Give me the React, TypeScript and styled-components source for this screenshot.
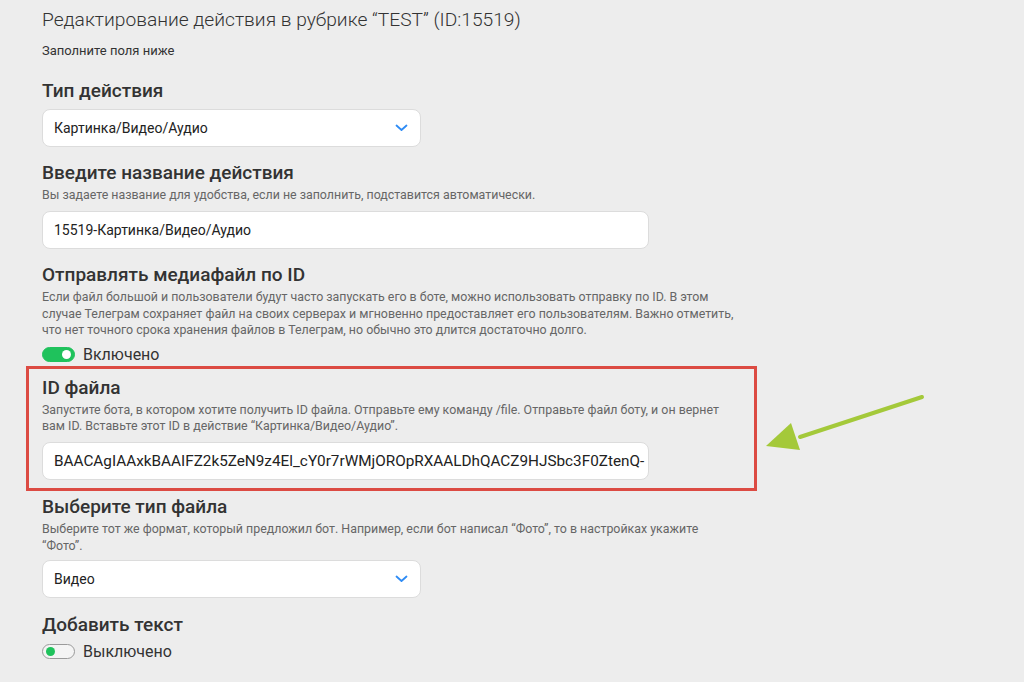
import styled, { createGlobalStyle } from "styled-components";

const GlobalStyle = createGlobalStyle`
  html, body {
    margin: 0;
    padding: 0;
    background: #ededed;
  }
  body {
    font-family: Roboto, "Liberation Sans", sans-serif;
    color: #2b2b2b;
    overflow: hidden;
  }
`;

const Page = styled.div`
  position: relative;
  width: 1024px;
  height: 682px;
  overflow: hidden;
  background: #ededed;
`;

const Form = styled.div`
  display: flex;
  flex-direction: column;
  padding: 8px 0 0 42px;
`;

const Title = styled.h1`
  margin: 0;
  font-size: 19.2px;
  line-height: 24px;
  font-weight: 300;
  color: #333;
`;

const Subtitle = styled.p`
  margin: 11px 0 0;
  font-size: 13px;
  line-height: 16px;
  color: #333;
`;

const Field = styled.div<{ $gap?: number }>`
  display: flex;
  flex-direction: column;
  margin-top: ${(p) => p.$gap ?? 15}px;
`;

const Label = styled.h2`
  margin: 0;
  font-size: 19px;
  line-height: 22px;
  font-weight: 500;
  color: #333;
`;

const Hint = styled.p<{ $tight?: boolean }>`
  margin: 3px 0 ${(p) => (p.$tight ? -1 : 1)}px;
  font-size: 12.4px;
  line-height: 16.4px;
  color: #666;
  white-space: nowrap;
`;

const Box = styled.div<{ $wide?: boolean; $mono?: boolean }>`
  display: flex;
  align-items: center;
  justify-content: space-between;
  box-sizing: border-box;
  width: ${(p) => (p.$wide ? 607 : 379)}px;
  height: 38px;
  margin-top: 7px;
  padding: 0 12px 0 11px;
  background: #fff;
  border: 1px solid #dcdcdc;
  border-radius: 8px;
  font-size: ${(p) => (p.$mono ? 15.3 : 14)}px;
  color: #222;
  white-space: nowrap;
  overflow: hidden;
`;

const Toggle = styled.div`
  display: flex;
  align-items: center;
  gap: 8px;
  margin-top: 5px;
  height: 20px;
  font-size: 16px;
  color: #333;
`;

const Switch = styled.span<{ $on?: boolean }>`
  position: relative;
  box-sizing: border-box;
  width: 33px;
  height: 15px;
  border-radius: 8px;
  background: ${(p) => (p.$on ? "#1fc25c" : "#f4f4f4")};
  border: 1px solid ${(p) => (p.$on ? "#1fc25c" : "#9a9a9a")};

  &::after {
    content: "";
    position: absolute;
    top: 2px;
    left: ${(p) => (p.$on ? "19px" : "3px")};
    width: 9px;
    height: 9px;
    border-radius: 50%;
    background: ${(p) => (p.$on ? "#fff" : "#1fc25c")};
  }
`;

const Highlight = styled.div`
  box-sizing: border-box;
  width: 731px;
  margin: 1px 0 0 -16px;
  padding: 8px 13px 8px;
  border: 3px solid #dc4b43;
  display: flex;
  flex-direction: column;
`;

const Arrow = styled.svg`
  position: absolute;
  left: 760px;
  top: 390px;
`;

const Chevron = () => (
  <svg width="13" height="8" viewBox="0 0 13 8">
    <path d="M1.5 1.5 L6.5 6 L11.5 1.5" fill="none" stroke="#2f8cf5" strokeWidth="1.8" strokeLinecap="round" strokeLinejoin="round" />
  </svg>
);

export default function App() {
  return (
    <Page>
      <GlobalStyle />
      <Form>
        <Title>Редактирование действия в рубрике “TEST” (ID:15519)</Title>
        <Subtitle>Заполните поля ниже</Subtitle>

        <Field $gap={21}>
          <Label>Тип действия</Label>
          <Box>
            <span>Картинка/Видео/Аудио</span>
            <Chevron />
          </Box>
        </Field>

        <Field>
          <Label>Введите название действия</Label>
          <Hint>Вы задаете название для удобства, если не заполнить, подставится автоматически.</Hint>
          <Box $wide>15519-Картинка/Видео/Аудио</Box>
        </Field>

        <Field>
          <Label>Отправлять медиафайл по ID</Label>
          <Hint>
            Если файл большой и пользователи будут часто запускать его в боте, можно использовать отправку по ID. В этом
            <br />
            случае Телеграм сохраняет файл на своих серверах и мгновенно предоставляет его пользователям. Важно отметить,
            <br />
            что нет точного срока хранения файлов в Телеграм, но обычно это длится достаточно долго.
          </Hint>
          <Toggle>
            <Switch $on />
            Включено
          </Toggle>
        </Field>

        <Highlight>
          <Label>ID файла</Label>
          <Hint>
            Запустите бота, в котором хотите получить ID файла. Отправьте ему команду /file. Отправьте файл боту, и он вернет
            <br />
            вам ID. Вставьте этот ID в действие “Картинка/Видео/Аудио”.
          </Hint>
          <Box $wide $mono>BAACAgIAAxkBAAIFZ2k5ZeN9z4El_cY0r7rWMjOROpRXAALDhQACZ9HJSbc3F0ZtenQ-</Box>
        </Highlight>

        <Field $gap={5}>
          <Label>Выберите тип файла</Label>
          <Hint $tight>
            Выберите тот же формат, который предложил бот. Например, если бот написал “Фото”, то в настройках укажите
            <br />
            “Фото”.
          </Hint>
          <Box>
            <span>Видео</span>
            <Chevron />
          </Box>
        </Field>

        <Field $gap={16}>
          <Label>Добавить текст</Label>
          <Toggle>
            <Switch />
            Выключено
          </Toggle>
        </Field>

        <Field $gap={22}>
          <Label>Показывать кнопки под этой записью</Label>
        </Field>
      </Form>

      <Arrow width="170" height="70" viewBox="0 0 170 70">
        <line x1="162" y1="7" x2="40" y2="47" stroke="#a4c93a" strokeWidth="4" strokeLinecap="round" />
        <polygon points="6,56 31,33 40,60" fill="#a4c93a" />
      </Arrow>
    </Page>
  );
}
